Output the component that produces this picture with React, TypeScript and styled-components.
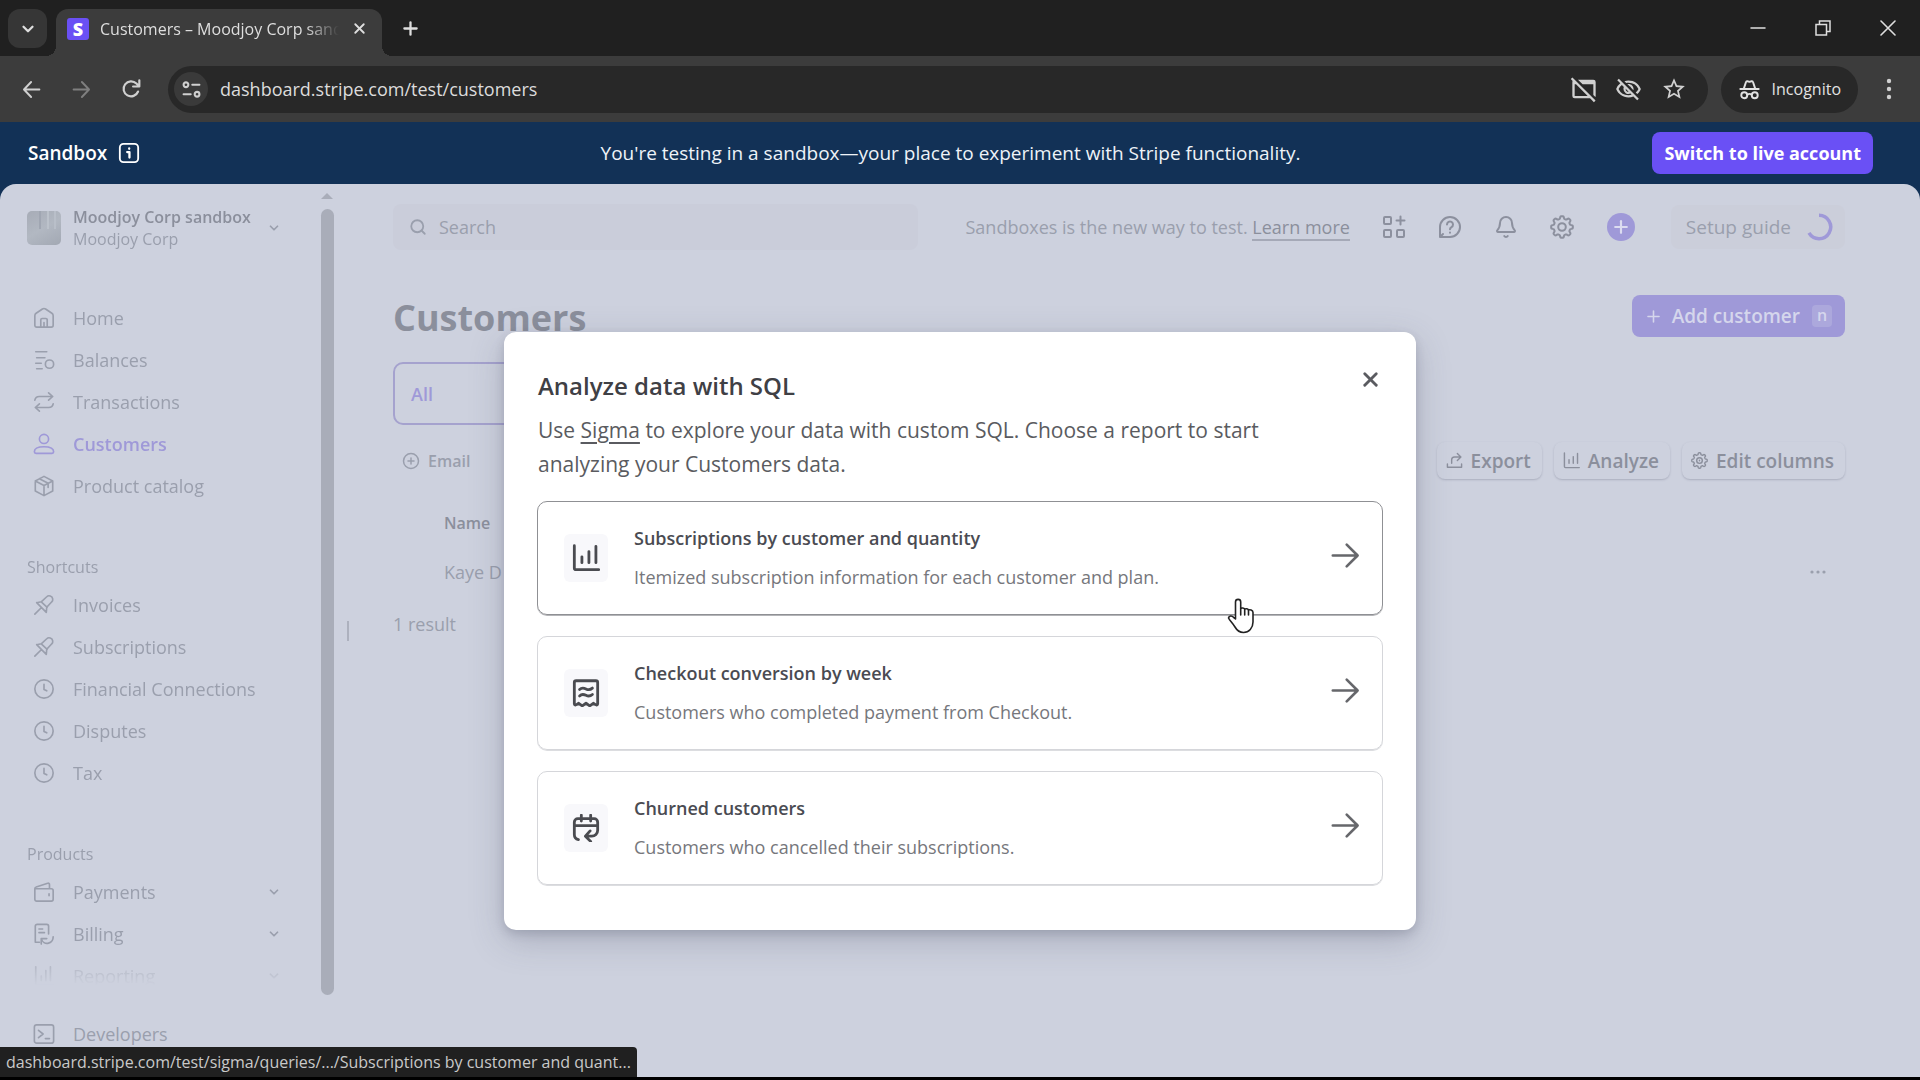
import React from "react";
import styled, { createGlobalStyle } from "styled-components";
import { Bell, ChevronDown, Plus, Search, X } from "lucide-react";
import { MdOutlineVisibilityOff, MdStarOutline, MdWebAssetOff } from "react-icons/md";

const c = {
  strip: "#202020",
  chrome: "#3c3c3c",
  field: "#282828",
  banner: "#123156",
  brand: "#6a50f5",
  page: "#cdd1de",
  faint: "#9a9fad",
  soft: "#8b8f9c",
  accent: "#9f99d8",
};

const GlobalStyle = createGlobalStyle`
  *, *::before, *::after { box-sizing: border-box; }
  body { margin: 0; background: #000; }
  body, button, input {
    font-family: "Open Sans", "Noto Sans", sans-serif;
  }
  button { border: 0; padding: 0; background: none; color: inherit; cursor: pointer; }
  a { color: inherit; text-decoration: none; }
  svg { display: block; flex: none; }
`;

const Window = styled.div`
  display: flex;
  flex-direction: column;
  height: 100vh;
  padding-bottom: 3px;
  background: #000;
  overflow: hidden;
`;

/* ---------- browser chrome ---------- */

const TabStrip = styled.div`
  display: flex;
  align-items: flex-end;
  height: 56px;
  flex: none;
  background: ${c.strip};
  color: #dedede;
`;

const TabSearch = styled.button`
  display: grid;
  place-items: center;
  width: 39px;
  height: 39px;
  margin: 0 9px 8px 8px;
  border-radius: 12px;
  background: #363636;
`;

const Tab = styled.div`
  position: relative;
  display: flex;
  align-items: center;
  gap: 11px;
  width: 326px;
  height: 47px;
  padding: 0 14px 8px 11px;
  border-radius: 12px 12px 0 0;
  background: ${c.chrome};
  &::before, &::after {
    content: "";
    position: absolute;
    bottom: 0;
    width: 10px;
    height: 10px;
  }
  &::before { left: -10px; background: radial-gradient(circle at 0 0, transparent 10px, ${c.chrome} 10px); }
  &::after { right: -10px; background: radial-gradient(circle at 100% 0, transparent 10px, ${c.chrome} 10px); }
`;

const Favicon = styled.span`
  display: grid;
  place-items: center;
  width: 22px;
  height: 22px;
  flex: none;
  border-radius: 3px;
  background: ${c.brand};
  color: #fff;
  font-size: 18px;
  line-height: 22px;
  font-weight: 800;
`;

const TabTitle = styled.span`
  flex: 1;
  overflow: hidden;
  white-space: nowrap;
  font-size: 16px;
  line-height: 24px;
  mask-image: linear-gradient(90deg, #000 86%, transparent);
`;

const ChromeButton = styled.button<{ $w?: number }>`
  display: grid;
  place-items: center;
  width: ${(p) => p.$w ?? 32}px;
  height: 32px;
  flex: none;
`;

const NewTab = styled(ChromeButton)`
  margin: 0 auto 12px 12px;
`;

const WindowControls = styled.div`
  display: flex;
  align-self: stretch;
  align-items: center;
  button { width: 65px; }
`;

const Toolbar = styled.div`
  display: flex;
  align-items: center;
  height: 66px;
  flex: none;
  padding: 0 15px;
  background: ${c.chrome};
  color: #d0d0d0;
`;

const NavButtons = styled.div`
  display: flex;
  gap: 18px;
  margin-right: 21px;
`;

const Omnibox = styled.div`
  display: flex;
  align-items: center;
  flex: 1;
  height: 47px;
  padding: 0 18px 0 6px;
  border-radius: 24px;
  background: ${c.field};
`;

const SiteInfo = styled.button`
  display: grid;
  place-items: center;
  width: 34px;
  height: 34px;
  border-radius: 50%;
  background: #3a3a3a;
`;

const Address = styled.input`
  flex: 1;
  min-width: 0;
  margin-left: 12px;
  padding: 0;
  border: 0;
  outline: 0;
  background: none;
  color: #dcdcdc;
  font-size: 18px;
  line-height: 28px;
`;

const OmniActions = styled.div`
  display: flex;
  gap: 13px;
`;

const Incognito = styled.button`
  display: flex;
  align-items: center;
  gap: 12px;
  height: 47px;
  margin: 0 15px 0 13px;
  padding: 0 17px 0 18px;
  border-radius: 24px;
  background: ${c.field};
  color: #e2e2e2;
  font-size: 16px;
  line-height: 24px;
`;

/* ---------- sandbox banner ---------- */

const Banner = styled.header`
  display: grid;
  grid-template-columns: 1fr auto 1fr;
  align-items: center;
  height: 62px;
  flex: none;
  padding: 0 47px 0 28px;
  background: ${c.banner};
  color: #fff;
  font-size: 19px;
  line-height: 24px;
  p { margin: 0; color: #eef3f8; }
`;

const SandboxLabel = styled.div`
  display: flex;
  align-items: center;
  gap: 11px;
  font-weight: 600;
`;

const LiveButton = styled.button`
  justify-self: end;
  height: 42px;
  padding: 0 12px;
  border-radius: 8px;
  background: ${c.brand};
  color: #fff;
  font-size: 18px;
  line-height: 24px;
  font-weight: 700;
`;

/* ---------- dashboard ---------- */

const PageWrap = styled.div`
  position: relative;
  display: flex;
  flex: 1;
  min-height: 0;
  background: ${c.banner};
`;

const Page = styled.div`
  display: flex;
  flex: 1;
  min-width: 0;
  border-radius: 16px 16px 0 0;
  background: ${c.page};
  color: ${c.faint};
  font-size: 18px;
  line-height: 24px;
`;

const Sidebar = styled.aside`
  display: flex;
  flex-direction: column;
  width: 320px;
  flex: none;
`;

const SidebarScroll = styled.div`
  flex: 1;
  min-height: 0;
  overflow: hidden;
  mask-image: linear-gradient(180deg, #000 calc(100% - 40px), transparent 100%);
`;

const Account = styled.button`
  display: flex;
  align-items: center;
  gap: 12px;
  width: 100%;
  margin: 22px 0 47px;
  padding: 0 39px 0 27px;
  text-align: left;
  font-size: 16px;
  line-height: 22px;
  strong { display: block; font-weight: 600; color: ${c.soft}; }
  span { flex: 1; white-space: nowrap; }
`;

const AccountLogo = styled.i`
  width: 34px;
  height: 34px;
  flex: none;
  border-radius: 5px;
  background:
    linear-gradient(90deg, transparent 12px, #a0a6b2 12px 14px, transparent 14px 20px, #bcc2cb 20px 22px, transparent 22px 27px, #b9bfc9 27px 29px, transparent 29px) 0 0 / 100% 18px no-repeat,
    linear-gradient(150deg, #a7acb7, #b2b8c2 50%, #a2a8b3);
`;

const Group = styled.nav`
  & + & { margin-top: 43px; }
`;

const GroupLabel = styled.div`
  padding-left: 27px;
  font-size: 16px;
  line-height: 34px;
`;

const NavLink = styled.a<{ $active?: boolean }>`
  display: flex;
  align-items: center;
  gap: 18px;
  height: 42px;
  padding: 0 39px 0 33px;
  color: ${(p) => (p.$active ? c.accent : c.faint)};
  font-weight: ${(p) => (p.$active ? 600 : 400)};
  span { flex: 1; white-space: nowrap; }
`;

const SidebarFooter = styled.div`
  height: 92px;
  flex: none;
  padding-top: 28px;
`;

const ScrollTrack = styled.div`
  display: flex;
  flex-direction: column;
  align-items: center;
  width: 14px;
  flex: none;
  padding: 9px 0 82px;
`;

const ScrollArrow = styled.i`
  margin-bottom: 10px;
  border: 6px solid transparent;
  border-top: 0;
  border-bottom-color: #a9adb9;
`;

const ScrollThumb = styled.i`
  flex: 1;
  width: 13px;
  border-radius: 7px;
  background: #a9adb9;
`;

const Splitter = styled.div`
  display: grid;
  place-items: center;
  width: 28px;
  flex: none;
  i { width: 2px; height: 20px; background: #adb1be; }
`;

const Main = styled.main`
  flex: 1;
  min-width: 0;
  padding: 19px 75px 0 31px;
`;

const TopBar = styled.div`
  display: flex;
  align-items: center;
  height: 48px;
`;

const SearchBox = styled.label`
  display: flex;
  align-items: center;
  gap: 12px;
  width: 525px;
  height: 46px;
  padding: 0 16px;
  border-radius: 8px;
  background: #cacdda;
  input {
    flex: 1;
    border: 0;
    outline: 0;
    padding: 0;
    background: none;
    font-size: 18px;
    line-height: 24px;
  }
  input::placeholder { color: ${c.faint}; opacity: 1; }
`;

const Notice = styled.p`
  margin: 0 32px 0 auto;
  white-space: nowrap;
  a { border-bottom: 2px solid #a5a9b7; color: ${c.soft}; }
`;

const IconRow = styled.div`
  display: flex;
  align-items: center;
  gap: 32px;
  color: #8c909e;
`;

const Create = styled.button`
  display: grid;
  place-items: center;
  width: 28px;
  height: 28px;
  margin-left: 1px;
  border-radius: 50%;
  background: ${c.accent};
  color: #dcdcf0;
`;

const SetupGuide = styled.button`
  display: flex;
  align-items: center;
  gap: 14px;
  height: 44px;
  margin-left: 36px;
  padding: 0 12px 0 15px;
  border-radius: 8px;
  background: #cbceda;
  font-size: 19px;
  line-height: 24px;
  white-space: nowrap;
  svg { color: ${c.accent}; }
`;

const TitleRow = styled.div`
  display: flex;
  align-items: center;
  justify-content: space-between;
  height: 42px;
  margin: 44px 0 25px;
  h1 { margin: 0; padding-top: 4px; color: ${c.soft}; font-size: 36px; line-height: 48px; font-weight: 700; }
`;

const AddCustomer = styled.button`
  display: flex;
  align-items: center;
  gap: 9px;
  height: 42px;
  padding: 0 13px 0 12px;
  border-radius: 8px;
  background: ${c.accent};
  color: #d5d6ec;
  font-size: 19px;
  line-height: 24px;
  font-weight: 600;
  kbd {
    width: 20px;
    height: 22px;
    margin-left: 3px;
    border-radius: 4px;
    background: #aca8dc;
    font: inherit;
    font-size: 16px;
    line-height: 20px;
  }
`;

const FilterTab = styled.button`
  display: block;
  width: 352px;
  height: 63px;
  padding: 0 16px;
  border: 2px solid #a5a2ce;
  border-radius: 10px;
  color: ${c.accent};
  text-align: left;
  font-size: 18px;
  line-height: 24px;
  font-weight: 600;
`;

const Actions = styled.div`
  display: flex;
  align-items: center;
  gap: 12px;
  height: 37px;
  margin: 17px 0 21px;
`;

const Chip = styled.button`
  display: flex;
  align-items: center;
  gap: 8px;
  margin-right: auto;
  padding-left: 9px;
  font-size: 16px;
  line-height: 24px;
  font-weight: 600;
`;

const Action = styled.button`
  display: flex;
  align-items: center;
  gap: 8px;
  height: 37px;
  padding: 0 11px 0 9px;
  border-radius: 8px;
  box-shadow: 0 1px 2px rgba(120, 125, 145, 0.4);
  color: ${c.soft};
  font-size: 19px;
  line-height: 24px;
  font-weight: 600;
`;

const Table = styled.table`
  width: 100%;
  border-collapse: collapse;
  text-align: left;
  th, td { padding: 0 0 0 51px; }
  th { height: 46px; color: ${c.soft}; font-size: 16px; font-weight: 600; }
  td { height: 52px; }
  td:last-child { padding: 0 18px 0 0; }
  td button { display: block; margin-left: auto; }
`;

const Results = styled.p`
  margin: 14px 0 0;
`;

/* ---------- dialog ---------- */

const Backdrop = styled.div`
  position: absolute;
  inset: 0;
  display: grid;
  place-items: center;
`;

const Dialog = styled.section`
  width: 912px;
  max-width: 90%;
  padding: 35px 33px 45px;
  border-radius: 12px;
  background: #fff;
  box-shadow: 0 10px 34px rgba(70, 75, 95, 0.26), 0 4px 10px rgba(70, 75, 95, 0.2);
  color: #5a5b60;
`;

const DialogHead = styled.div`
  display: flex;
  justify-content: space-between;
  h2 { margin: 0; padding-left: 1px; color: #3f4045; font-size: 24px; line-height: 38px; font-weight: 600; }
`;

const CloseButton = styled.button`
  display: grid;
  place-items: center;
  width: 26px;
  height: 26px;
`;

const Intro = styled.p`
  margin: 8px 70px 20px 1px;
  font-size: 21px;
  line-height: 34px;
  a { text-decoration: underline; text-underline-offset: 4px; }
`;

const Reports = styled.div`
  display: grid;
  gap: 21px;
`;

const Report = styled.a<{ $hover?: boolean }>`
  display: flex;
  align-items: center;
  height: 114px;
  padding: 0 22px 0 26px;
  border: 1px solid ${(p) => (p.$hover ? "#8f9094" : "#d5d6da")};
  border-radius: 10px;
  box-shadow: 0 1px 0 ${(p) => (p.$hover ? "#b4b5b8" : "#dcdde0")};
`;

const Tile = styled.span`
  display: grid;
  place-items: center;
  width: 44px;
  height: 48px;
  margin-right: 26px;
  border-radius: 6px;
  background: #f8f8fb;
  color: #4a4b50;
`;

const ReportText = styled.span`
  flex: 1;
  color: #76777c;
  font-size: 18px;
  line-height: 39px;
  strong { display: block; color: #4a4b52; font-weight: 600; }
`;

const OpenArrow = styled.span`
  padding-bottom: 4px;
  color: #66676b;
`;

const Pointer = styled.span`
  position: absolute;
  left: calc(50% + 267px);
  top: calc(50% - 33px);
`;

const StatusBar = styled.div`
  position: absolute;
  left: 0;
  bottom: 0;
  height: 30px;
  padding: 0 6px;
  border-radius: 0 4px 0 0;
  background: #202020;
  color: #c9c9c9;
  font-size: 16px;
  line-height: 30px;
`;

/* ---------- icons ---------- */

type IconProps = { size?: number; sw?: number; vb?: number; children: React.ReactNode };

const Icon = ({ size = 22, sw = 2, vb = 24, children }: IconProps) => (
  <svg width={size} height={size} viewBox={`0 0 ${vb} ${vb}`} fill="none" stroke="currentColor" strokeWidth={sw} strokeLinecap="round" strokeLinejoin="round" aria-hidden="true">
    {children}
  </svg>
);

const gearPath = (() => {
  const pts: string[] = [];
  for (let i = 0; i < 128; i++) {
    const t = (i / 128) * Math.PI * 2;
    const r = 9.6 + 1.3 * Math.tanh(2.2 * Math.cos(8 * t));
    pts.push(`${(12 + r * Math.cos(t)).toFixed(2)} ${(12 + r * Math.sin(t)).toFixed(2)}`);
  }
  return `M${pts.join("L")}Z`;
})();

const icons: Record<string, React.ReactNode> = {
  home: (<><path d="M2 9.5C2 8.4 2.5 7.400 3.400 6.800l6.900-4.600a3 3 0 0 1 3.400 0l6.900 4.600c.9.6 1.400 1.600 1.400 2.700V20a2 2 0 0 1-2 2H4a2 2 0 0 1-2-2z" /><path d="M8.500 22v-8a1.500 1.500 0 0 1 1.500-1.500h4a1.500 1.500 0 0 1 1.500 1.500v8M12 17v5" /></>),
  balances: (<><path d="M3 3h12M4 9.500h9M3 15.500h6M4 21.500h6" /><circle cx="18" cy="16.500" r="4.500" /></>),
  transactions: (<><path d="M17 2l4.500 4L17 10M21 6H7a5 5 0 0 0-5 4M7 14l-4.500 4L7 22M3 18h14a5 5 0 0 0 5-4" /></>),
  customers: (<><circle cx="12" cy="6.500" r="5" /><path d="M1.500 20.500C1.500 17 5 15 12 15s10.500 2 10.500 5.500c0 1-.7 1.800-1.800 1.800H3.300c-1.100 0-1.800-.8-1.800-1.800z" /></>),
  catalog: (<><path d="M12 1.500l9.500 5v11l-9.500 5-9.500-5v-11zM2.500 6.500l9.500 5 9.500-5M12 11.500v11M7 4l9.500 5v4.500" /></>),
  pin: (<><path d="M2 22l7-7M4 9.500l10.500 10.500M4 9.500l5-1 6-5.500c1-1 2.500-1.300 3.800-.8 1.300.5 2.500 1.700 2.700 3 .2 1.300-.1 2.400-1 3.300L15 14.500 14.500 20M9 8.500l6.500 6" /></>),
  clock: (<><circle cx="12" cy="12" r="10" /><path d="M12 7v5.500l3 1.500" /></>),
  payments: (<><path d="M2 8.500h18a2 2 0 0 1 2 2V20a2 2 0 0 1-2 2H4a2 2 0 0 1-2-2zM2 8.500a2 2 0 0 1 1.500-2L16 2.500a1.500 1.500 0 0 1 2 1.500v4M17.500 14v2" /></>),
  billing: (<><path d="M7 21H2.500V3.500a2 2 0 0 1 2-2H15a2 2 0 0 1 2 2V12M6.500 6.500h4M6.500 10.500h6M9 23v-6h6M9 17c1 4 4.500 6 8 5 3-.8 5-3.500 5-7" /></>),
  reporting: (<><path d="M3 2v20h19M9 17v-5M14 17V6M19 17V2" /></>),
  developers: (<><rect x="1.500" y="2" width="21" height="20" rx="2.500" /><path d="M6 8l5 4-5 4M13.500 17h4.500" /></>),
  apps: (<><rect x="2" y="2" width="7" height="7" rx="1" /><rect x="2" y="15" width="7" height="7" rx="1" /><rect x="15" y="15" width="7" height="7" rx="1" /><path d="M18.500 1.500v8M14.500 5.500h8" /></>),
  help: (<><path d="M2 22V12a10 10 0 1 1 10 10zM2 22l3-3" /><path d="M9 9.500a3 3 0 1 1 4.500 2.600c-1 .6-1.500 1-1.500 2.200M12 17.500v.2" /></>),
  gear: (<><path d={gearPath} /><circle cx="12" cy="12" r="3.800" /></>),
  cog: (<><path d={gearPath} /><circle cx="12" cy="12" r="4" /><path d="M12 11.500v1" /></>),
  export: (<><path d="M2 17v4.500h20V17M8 16v-5a4 4 0 0 1 4-4h8M16 2l5 5-5 5" /></>),
  chart: (<><path d="M2 1.500v19a1.500 1.500 0 0 0 1.500 1.500H23M8.500 16v-5M14.500 16V6.500M20.500 16V2" /></>),
  receipt: (<><path d="M2 21.500V3a1.500 1.500 0 0 1 1.500-1.500h17A1.500 1.500 0 0 1 22 3v18.500c0 1-1.300 1-2 .4l-1.500-1.100-3.300 2.200-3.200-2.200L8.800 23l-3.300-2.200L4 21.900c-.7.600-2 .6-2-.4z" /><path d="M6.500 9c2-2 3.500-1.500 5.500-.5s3.500 1 5.500-.7M6.500 14.500c2-2 3.500-1.500 5.500-.5s3.500 1 5.500-.7" /></>),
  calendar: (<><path d="M5.500 22C3.500 21.500 2 20 2 17.500V7a3 3 0 0 1 3-3h14a3 3 0 0 1 3 3v7a5 5 0 0 1-5 5h-5M2 10h20M8 1v5M16 1v5M15.500 14.500L11.500 19l4.500 4.500" /></>),
};

const Glyph = ({ name, size, sw }: { name: string; size?: number; sw?: number }) => (
  <Icon size={size} sw={sw}>{icons[name]}</Icon>
);

const Arrow = ({ back }: { back?: boolean }) => (
  <Icon size={19} sw={2.4}><path d={back ? "M22 12H3M11.500 2.500L2.500 12l9 9.500" : "M2 12h19M12.500 2.500l9 9.500-9 9.500"} /></Icon>
);

/* ---------- data ---------- */

const primary = [
  ["home", "Home"],
  ["balances", "Balances"],
  ["transactions", "Transactions"],
  ["customers", "Customers"],
  ["catalog", "Product catalog"],
];
const shortcuts = [
  ["pin", "Invoices"],
  ["pin", "Subscriptions"],
  ["clock", "Financial Connections"],
  ["clock", "Disputes"],
  ["clock", "Tax"],
];
const products = [
  ["payments", "Payments"],
  ["billing", "Billing"],
  ["reporting", "Reporting"],
];
const reports = [
  ["chart", "Subscriptions by customer and quantity", "Itemized subscription information for each customer and plan."],
  ["receipt", "Checkout conversion by week", "Customers who completed payment from Checkout."],
  ["calendar", "Churned customers", "Customers who cancelled their subscriptions."],
];

const NavGroup = ({ label, items, expandable }: { label?: string; items: string[][]; expandable?: boolean }) => (
  <Group aria-label={label ?? "Main"}>
    {label && <GroupLabel>{label}</GroupLabel>}
    {items.map(([icon, text]) => (
      <NavLink key={text} href="#" $active={text === "Customers"}>
        <Glyph name={icon} sw={1.8} />
        <span>{text}</span>
        {expandable && <ChevronDown size={14} strokeWidth={3} />}
      </NavLink>
    ))}
  </Group>
);

const BrowserChrome = () => (
  <>
    <TabStrip>
      <TabSearch aria-label="Search tabs"><ChevronDown size={18} strokeWidth={3} /></TabSearch>
      <Tab>
        <Favicon>S</Favicon>
        <TabTitle>Customers – Moodjoy Corp sandbox</TabTitle>
        <ChromeButton $w={18} aria-label="Close tab"><X size={17} strokeWidth={2.6} /></ChromeButton>
      </Tab>
      <NewTab aria-label="New tab"><Plus size={21} strokeWidth={2.6} /></NewTab>
      <WindowControls>
        <ChromeButton aria-label="Minimize"><Icon size={16} vb={16} sw={1.5}><path d="M1 8h14" /></Icon></ChromeButton>
        <ChromeButton aria-label="Restore"><Icon size={16} vb={16} sw={1.5}><path d="M1 4.500h10.500V15H1zM4.500 4V1H15v10.500h-3" strokeLinejoin="miter" /></Icon></ChromeButton>
        <ChromeButton aria-label="Close"><Icon size={16} vb={16} sw={1.6}><path d="M1 1l14 14M15 1L1 15" /></Icon></ChromeButton>
      </WindowControls>
    </TabStrip>
    <Toolbar>
      <NavButtons>
        <ChromeButton aria-label="Back"><Arrow back /></ChromeButton>
        <ChromeButton aria-label="Forward" disabled style={{ opacity: 0.45 }}><Arrow /></ChromeButton>
        <ChromeButton aria-label="Reload"><Icon size={20} sw={2.6}><path d="M20.500 15A9 9 0 1 1 18.500 5.500L21.500 8.500M22 1.500v7.500h-7.500" /></Icon></ChromeButton>
      </NavButtons>
      <Omnibox>
        <SiteInfo aria-label="Site information">
          <Icon size={19} sw={2.6}><circle cx="5" cy="6" r="3" /><path d="M13 6h9M2 18h9" /><circle cx="19" cy="18" r="3" /></Icon>
        </SiteInfo>
        <Address aria-label="Address" defaultValue="dashboard.stripe.com/test/customers" />
        <OmniActions>
          <ChromeButton aria-label="Install blocked"><MdWebAssetOff size={28} /></ChromeButton>
          <ChromeButton aria-label="Third-party cookies blocked"><MdOutlineVisibilityOff size={27} /></ChromeButton>
          <ChromeButton aria-label="Bookmark"><MdStarOutline size={26} /></ChromeButton>
        </OmniActions>
      </Omnibox>
      <Incognito>
        <Icon size={21} sw={2.2}><path d="M1.500 11.500h21M5.500 11L8 3.500c.2-.8 1-1.200 1.800-.9l2.200.7 2.200-.7c.8-.3 1.600.1 1.800.9L18.500 11M9.500 18c1.500-1.200 3.500-1.200 5 0" /><circle cx="6" cy="18.500" r="3.400" /><circle cx="18" cy="18.500" r="3.400" /></Icon>
        Incognito
      </Incognito>
      <ChromeButton aria-label="Menu">
        <svg width="6" height="22" viewBox="0 0 6 22" fill="currentColor" aria-hidden="true"><circle cx="3" cy="3" r="2.200" /><circle cx="3" cy="11" r="2.200" /><circle cx="3" cy="19" r="2.200" /></svg>
      </ChromeButton>
    </Toolbar>
  </>
);

const Dots = () => (
  <svg width="18" height="4" viewBox="0 0 18 4" fill="currentColor" aria-hidden="true"><circle cx="3" cy="2" r="1.600" /><circle cx="9" cy="2" r="1.600" /><circle cx="15" cy="2" r="1.600" /></svg>
);

export default function App() {
  return (
    <>
      <GlobalStyle />
      <Window>
        <BrowserChrome />
        <Banner>
          <SandboxLabel>
            Sandbox
            <Icon size={22} sw={2}><rect x="2" y="2" width="20" height="20" rx="4" /><path d="M10 11h2.500v6M12.200 7v.4" strokeWidth="2.500" /></Icon>
          </SandboxLabel>
          <p>You're testing in a sandbox—your place to experiment with Stripe functionality.</p>
          <LiveButton>Switch to live account</LiveButton>
        </Banner>
        <PageWrap>
          <Page>
            <Sidebar>
              <SidebarScroll>
                <Account>
                  <AccountLogo />
                  <span><strong>Moodjoy Corp sandbox</strong>Moodjoy Corp</span>
                  <ChevronDown size={14} strokeWidth={3} />
                </Account>
                <NavGroup items={primary} />
                <NavGroup label="Shortcuts" items={shortcuts} />
                <NavGroup label="Products" items={products} expandable />
              </SidebarScroll>
              <SidebarFooter>
                <NavLink href="#"><Glyph name="developers" sw={1.8} /><span>Developers</span></NavLink>
              </SidebarFooter>
            </Sidebar>
            <ScrollTrack><ScrollArrow /><ScrollThumb /></ScrollTrack>
            <Splitter><i /></Splitter>
            <Main>
              <TopBar>
                <SearchBox>
                  <Search size={18} strokeWidth={2.4} />
                  <input aria-label="Search" placeholder="Search" />
                </SearchBox>
                <Notice>Sandboxes is the new way to test. <a href="#">Learn more</a></Notice>
                <IconRow>
                  <button aria-label="Apps"><Glyph name="apps" size={24} /></button>
                  <button aria-label="Help"><Glyph name="help" size={24} /></button>
                  <button aria-label="Notifications"><Bell size={24} strokeWidth={2} /></button>
                  <button aria-label="Settings"><Glyph name="gear" size={24} /></button>
                  <Create aria-label="Create"><Plus size={20} strokeWidth={2.6} /></Create>
                </IconRow>
                <SetupGuide>
                  Setup guide
                  <Icon size={28} sw={3}><path d="M12 2a10 10 0 1 1-8.600 15.100" strokeLinecap="butt" /></Icon>
                </SetupGuide>
              </TopBar>
              <TitleRow>
                <h1>Customers</h1>
                <AddCustomer><Plus size={19} strokeWidth={2} />Add customer<kbd>n</kbd></AddCustomer>
              </TitleRow>
              <FilterTab>All</FilterTab>
              <Actions>
                <Chip><Icon size={18}><circle cx="12" cy="12" r="10" /><path d="M12 8v8M8 12h8" /></Icon>Email</Chip>
                <Action><Glyph name="export" size={17} />Export</Action>
                <Action><Glyph name="chart" size={17} />Analyze</Action>
                <Action><Glyph name="cog" size={17} />Edit columns</Action>
              </Actions>
              <Table>
                <thead><tr><th colSpan={2}>Name</th></tr></thead>
                <tbody><tr><td>Kaye D</td><td><button aria-label="More"><Dots /></button></td></tr></tbody>
              </Table>
              <Results>1 result</Results>
            </Main>
          </Page>
          <Backdrop>
            <Dialog role="dialog" aria-labelledby="dialog-title">
              <DialogHead>
                <h2 id="dialog-title">Analyze data with SQL</h2>
                <CloseButton aria-label="Close dialog"><X size={23} strokeWidth={3} /></CloseButton>
              </DialogHead>
              <Intro>Use <a href="#">Sigma</a> to explore your data with custom SQL. Choose a report to start analyzing your Customers data.</Intro>
              <Reports>
                {reports.map(([icon, title, text], i) => (
                  <Report key={title} href="#" $hover={i === 0}>
                    <Tile><Glyph name={icon} size={28} sw={2.4} /></Tile>
                    <ReportText><strong>{title}</strong>{text}</ReportText>
                    <OpenArrow><Icon size={29} sw={2.2}><path d="M1.500 12h20M13 3l9 9-9 9" /></Icon></OpenArrow>
                  </Report>
                ))}
              </Reports>
            </Dialog>
          </Backdrop>
          <Pointer>
            <svg width="28" height="36" viewBox="0 0 28 36" fill="#fff" stroke="#222" strokeWidth="1.600" strokeLinejoin="round" strokeLinecap="round" aria-hidden="true">
              <path d="M8.500 21V4a2.600 2.600 0 0 1 5.200 0v6.500c.8-.9 3.300-.6 4 .6 1-.7 3.200-.3 3.700.9 1.200-.5 4.600-.2 4.600 2.500V24c0 6-4 10.500-9.500 10.500-4 0-6.500-2-8.500-5.500-2.500-4-5-6-6.500-9 .5-2.500 3.500-2.500 5-.7z" />
              <path d="M13.700 10.500V17M17.700 11.500V17M21.500 12.500V17" fill="none" />
            </svg>
          </Pointer>
          <StatusBar>dashboard.stripe.com/test/sigma/queries/.../Subscriptions by customer and quant...</StatusBar>
        </PageWrap>
      </Window>
    </>
  );
}
